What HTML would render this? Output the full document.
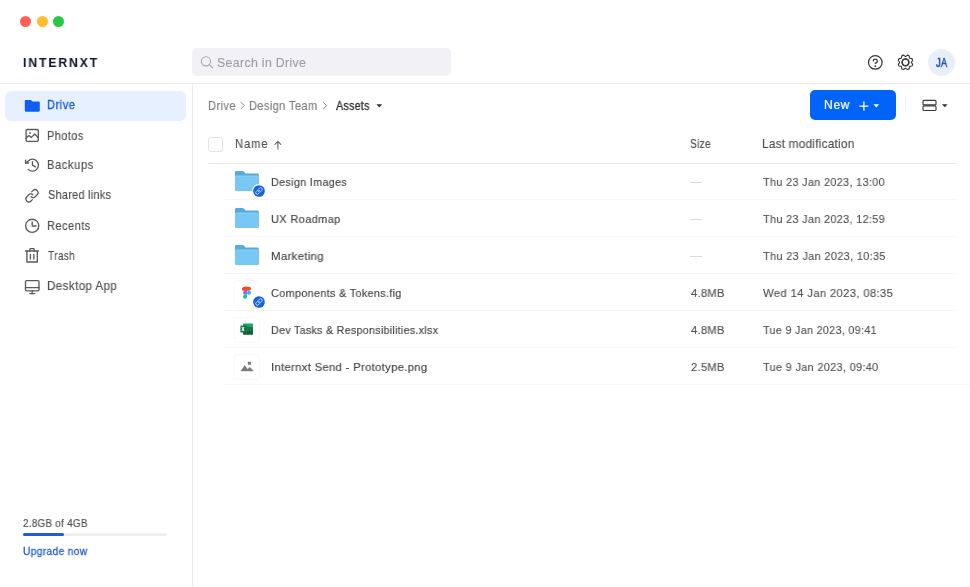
<!DOCTYPE html>
<html><head><meta charset="utf-8"><style>
html,body{margin:0;padding:0;width:970px;height:587px;overflow:hidden;background:#fff;font-family:"Liberation Sans", sans-serif;}
.t{position:absolute;white-space:nowrap;will-change:transform;}
.abs{position:absolute;}
</style></head><body>
<div class="abs" style="left:20.0px;top:16px;width:11px;height:11px;background:#FE5F57;border-radius:50%;"></div>
<div class="abs" style="left:36.5px;top:16px;width:11px;height:11px;background:#FEBC2E;border-radius:50%;"></div>
<div class="abs" style="left:53.0px;top:16px;width:11px;height:11px;background:#28C840;border-radius:50%;"></div>
<div class="abs" style="left:0px;top:83px;width:970px;height:1px;background:#ECECEC;"></div>
<div class="abs" style="left:192px;top:84px;width:1px;height:503px;background:#ECECEC;"></div>
<div class="abs" style="left:192px;top:48px;width:259px;height:28px;background:#F1F1F6;border-radius:5px;"></div>
<div class="abs" style="left:928px;top:49px;width:27px;height:27px;background:#E8EFFB;border-radius:50%;"></div>
<div class="abs" style="left:5px;top:91px;width:181px;height:30px;background:#E6F0FE;border-radius:6px;"></div>
<div class="abs" style="left:23px;top:533px;width:144px;height:3px;background:#EFEFEF;border-radius:2px;"></div>
<div class="abs" style="left:23px;top:533px;width:41px;height:3px;background:#1F5BD8;border-radius:2px;"></div>
<div class="abs" style="left:810px;top:90px;width:86px;height:30px;background:#0064F8;border-radius:5px;"></div>
<div class="abs" style="left:905px;top:96px;width:1px;height:16px;background:#F0F0F0;"></div>
<div class="abs" style="left:208px;top:137px;width:12.6px;height:12.6px;background:transparent;border:1px solid #E2E2E2;border-radius:2.5px;"></div>
<div class="abs" style="left:208px;top:162.6px;width:748px;height:1.2px;background:#E9E9E9;"></div>
<div class="abs" style="left:689.5px;top:182.3px;width:12px;height:1px;background:#DCDCDC;"></div>
<div class="abs" style="left:224px;top:199px;width:731px;height:1px;background:#F5F5F5;"></div>
<div class="abs" style="left:689.5px;top:219.3px;width:12px;height:1px;background:#DCDCDC;"></div>
<div class="abs" style="left:224px;top:236px;width:731px;height:1px;background:#F5F5F5;"></div>
<div class="abs" style="left:689.5px;top:256.3px;width:12px;height:1px;background:#DCDCDC;"></div>
<div class="abs" style="left:224px;top:273px;width:731px;height:1px;background:#F5F5F5;"></div>
<div class="abs" style="left:224px;top:310px;width:731px;height:1px;background:#F5F5F5;"></div>
<div class="abs" style="left:224px;top:347px;width:731px;height:1px;background:#F5F5F5;"></div>
<div class="abs" style="left:224px;top:384px;width:746px;height:1px;background:#F5F5F5;"></div>
<div class="t" id="logo" style="left:22.50px;top:55.93px;font-size:13.08px;line-height:13.08px;letter-spacing:2.061px;color:#111A33;font-weight:700;-webkit-text-stroke:0.1px #111A33;transform:scaleX(0.93);transform-origin:0 0;">INTERNXT</div>
<div class="t" id="search" style="left:217.00px;top:56.66px;font-size:12.21px;line-height:12.21px;letter-spacing:0.325px;color:#9D9DA5;font-weight:400;-webkit-text-stroke:0.12px #9D9DA5;transform:scaleX(1.0112);transform-origin:0 0;">Search in Drive</div>
<div class="t" id="ja" style="left:936.00px;top:56.67px;font-size:12.20px;line-height:12.20px;letter-spacing:0.320px;color:#24509F;font-weight:400;-webkit-text-stroke:0.45px #24509F;transform:scaleX(0.76);transform-origin:0 0;">JA</div>
<div class="t" id="s_drive" style="left:47.00px;top:99.36px;font-size:12.21px;line-height:12.21px;letter-spacing:0.616px;color:#1D5FDB;font-weight:400;-webkit-text-stroke:0.35px #1D5FDB;transform:scaleX(0.9012);transform-origin:0 0;">Drive</div>
<div class="t" id="s_photos" style="left:46.80px;top:129.59px;font-size:12.06px;line-height:12.06px;letter-spacing:0.486px;color:#4E4E4E;font-weight:400;-webkit-text-stroke:0.15px #4E4E4E;transform:scaleX(0.9060);transform-origin:0 0;">Photos</div>
<div class="t" id="s_backups" style="left:47.00px;top:159.39px;font-size:12.06px;line-height:12.06px;letter-spacing:0.687px;color:#4E4E4E;font-weight:400;-webkit-text-stroke:0.15px #4E4E4E;transform:scaleX(0.9191);transform-origin:0 0;">Backups</div>
<div class="t" id="s_shared" style="left:47.80px;top:189.39px;font-size:12.06px;line-height:12.06px;letter-spacing:0.270px;color:#4E4E4E;font-weight:400;-webkit-text-stroke:0.15px #4E4E4E;transform:scaleX(0.9087);transform-origin:0 0;">Shared links</div>
<div class="t" id="s_recents" style="left:46.80px;top:219.69px;font-size:12.06px;line-height:12.06px;letter-spacing:0.515px;color:#4E4E4E;font-weight:400;-webkit-text-stroke:0.15px #4E4E4E;transform:scaleX(0.9125);transform-origin:0 0;">Recents</div>
<div class="t" id="s_trash" style="left:47.60px;top:249.59px;font-size:12.06px;line-height:12.06px;letter-spacing:0.488px;color:#4E4E4E;font-weight:400;-webkit-text-stroke:0.15px #4E4E4E;transform:scaleX(0.8279);transform-origin:0 0;">Trash</div>
<div class="t" id="s_desktop" style="left:46.70px;top:279.89px;font-size:12.06px;line-height:12.06px;letter-spacing:0.424px;color:#4E4E4E;font-weight:400;-webkit-text-stroke:0.15px #4E4E4E;transform:scaleX(0.9621);transform-origin:0 0;">Desktop App</div>
<div class="t" id="storage" style="left:23.20px;top:518.51px;font-size:10.03px;line-height:10.03px;letter-spacing:0.314px;color:#4E4E4E;font-weight:400;-webkit-text-stroke:0.15px #4E4E4E;transform:scaleX(0.9774);transform-origin:0 0;">2.8GB of 4GB</div>
<div class="t" id="upgrade" style="left:23.20px;top:545.52px;font-size:10.61px;line-height:10.61px;letter-spacing:0.332px;color:#2460D0;font-weight:400;-webkit-text-stroke:0.3px #2460D0;transform:scaleX(0.9666);transform-origin:0 0;">Upgrade now</div>
<div class="t" id="bc_drive" style="left:207.60px;top:99.79px;font-size:12.06px;line-height:12.06px;letter-spacing:0.454px;color:#7C7C7C;font-weight:400;-webkit-text-stroke:0.15px #7C7C7C;transform:scaleX(0.9210);transform-origin:0 0;">Drive</div>
<div class="t" id="bc_team" style="left:248.80px;top:99.79px;font-size:12.06px;line-height:12.06px;letter-spacing:0.411px;color:#7C7C7C;font-weight:400;-webkit-text-stroke:0.15px #7C7C7C;transform:scaleX(0.9178);transform-origin:0 0;">Design Team</div>
<div class="t" id="bc_assets" style="left:336.20px;top:99.79px;font-size:12.06px;line-height:12.06px;letter-spacing:0.203px;color:#303030;font-weight:400;-webkit-text-stroke:0.3px #303030;transform:scaleX(0.8990);transform-origin:0 0;">Assets</div>
<div class="t" id="new" style="left:824.20px;top:99.49px;font-size:12.06px;line-height:12.06px;letter-spacing:0.713px;color:#FFFFFF;font-weight:400;-webkit-text-stroke:0.2px #FFFFFF;transform:scaleX(0.9946);transform-origin:0 0;">New</div>
<div class="t" id="h_name" style="left:234.80px;top:138.81px;font-size:11.92px;line-height:11.92px;letter-spacing:1.064px;color:#505050;font-weight:400;-webkit-text-stroke:0.15px #505050;transform:scaleX(0.9336);transform-origin:0 0;">Name</div>
<div class="t" id="h_size" style="left:690.20px;top:138.71px;font-size:11.92px;line-height:11.92px;letter-spacing:0.370px;color:#505050;font-weight:400;-webkit-text-stroke:0.15px #505050;transform:scaleX(0.8500);transform-origin:0 0;">Size</div>
<div class="t" id="h_last" style="left:762.00px;top:138.71px;font-size:11.92px;line-height:11.92px;letter-spacing:0.262px;color:#505050;font-weight:400;-webkit-text-stroke:0.15px #505050;transform:scaleX(0.9864);transform-origin:0 0;">Last modification</div>
<div class="t" id="n0" style="left:271.30px;top:175.96px;font-size:11.63px;line-height:11.63px;letter-spacing:0.344px;color:#444444;font-weight:400;-webkit-text-stroke:0.15px #444444;transform:scaleX(0.9277);transform-origin:0 0;">Design Images</div>
<div class="t" id="d0" style="left:762.80px;top:175.96px;font-size:11.63px;line-height:11.63px;letter-spacing:0.345px;color:#505050;font-weight:400;-webkit-text-stroke:0.12px #505050;transform:scaleX(0.9355);transform-origin:0 0;">Thu 23 Jan 2023, 13:00</div>
<div class="t" id="n1" style="left:271.30px;top:212.96px;font-size:11.63px;line-height:11.63px;letter-spacing:0.385px;color:#444444;font-weight:400;-webkit-text-stroke:0.15px #444444;transform:scaleX(0.9459);transform-origin:0 0;">UX Roadmap</div>
<div class="t" id="d1" style="left:762.80px;top:212.96px;font-size:11.63px;line-height:11.63px;letter-spacing:0.304px;color:#505050;font-weight:400;-webkit-text-stroke:0.12px #505050;transform:scaleX(0.9417);transform-origin:0 0;">Thu 23 Jan 2023, 12:59</div>
<div class="t" id="n2" style="left:271.30px;top:249.96px;font-size:11.63px;line-height:11.63px;letter-spacing:0.272px;color:#444444;font-weight:400;-webkit-text-stroke:0.15px #444444;transform:scaleX(0.9874);transform-origin:0 0;">Marketing</div>
<div class="t" id="d2" style="left:762.80px;top:249.96px;font-size:11.63px;line-height:11.63px;letter-spacing:0.323px;color:#505050;font-weight:400;-webkit-text-stroke:0.12px #505050;transform:scaleX(0.9455);transform-origin:0 0;">Thu 23 Jan 2023, 10:35</div>
<div class="t" id="n3" style="left:271.30px;top:286.96px;font-size:11.63px;line-height:11.63px;letter-spacing:0.297px;color:#444444;font-weight:400;-webkit-text-stroke:0.15px #444444;transform:scaleX(0.9390);transform-origin:0 0;">Components &amp; Tokens.fig</div>
<div class="t" id="d3" style="left:762.80px;top:286.96px;font-size:11.63px;line-height:11.63px;letter-spacing:0.310px;color:#505050;font-weight:400;-webkit-text-stroke:0.12px #505050;transform:scaleX(0.9765);transform-origin:0 0;">Wed 14 Jan 2023, 08:35</div>
<div class="t" id="z3" style="left:690.50px;top:286.96px;font-size:11.63px;line-height:11.63px;letter-spacing:0.233px;color:#505050;font-weight:400;-webkit-text-stroke:0.12px #505050;transform:scaleX(0.9695);transform-origin:0 0;">4.8MB</div>
<div class="t" id="n4" style="left:271.30px;top:323.96px;font-size:11.63px;line-height:11.63px;letter-spacing:0.283px;color:#444444;font-weight:400;-webkit-text-stroke:0.15px #444444;transform:scaleX(0.9240);transform-origin:0 0;">Dev Tasks &amp; Responsibilities.xlsx</div>
<div class="t" id="d4" style="left:762.80px;top:323.96px;font-size:11.63px;line-height:11.63px;letter-spacing:0.327px;color:#505050;font-weight:400;-webkit-text-stroke:0.12px #505050;transform:scaleX(0.9277);transform-origin:0 0;">Tue 9 Jan 2023, 09:41</div>
<div class="t" id="z4" style="left:690.50px;top:323.96px;font-size:11.63px;line-height:11.63px;letter-spacing:0.233px;color:#505050;font-weight:400;-webkit-text-stroke:0.12px #505050;transform:scaleX(0.9695);transform-origin:0 0;">4.8MB</div>
<div class="t" id="n5" style="left:270.50px;top:360.96px;font-size:11.63px;line-height:11.63px;letter-spacing:0.300px;color:#444444;font-weight:400;-webkit-text-stroke:0.15px #444444;transform:scaleX(0.9746);transform-origin:0 0;">Internxt Send - Prototype.png</div>
<div class="t" id="d5" style="left:762.80px;top:360.96px;font-size:11.63px;line-height:11.63px;letter-spacing:0.320px;color:#505050;font-weight:400;-webkit-text-stroke:0.12px #505050;transform:scaleX(0.9423);transform-origin:0 0;">Tue 9 Jan 2023, 09:40</div>
<div class="t" id="z5" style="left:690.50px;top:360.96px;font-size:11.63px;line-height:11.63px;letter-spacing:0.233px;color:#505050;font-weight:400;-webkit-text-stroke:0.12px #505050;transform:scaleX(0.9695);transform-origin:0 0;">2.5MB</div>
<svg class="abs" style="left:0;top:0" width="970" height="587" viewBox="0 0 970 587">
<!-- drive folder -->
<path d="M24.8,101 Q24.8,99.9 25.9,99.9 L30.4,99.9 Q31,99.9 31.5,100.5 L32.6,101.6 L38.7,101.6 Q39.8,101.6 39.8,102.7 L39.8,110.6 Q39.8,111.7 38.7,111.7 L25.9,111.7 Q24.8,111.7 24.8,110.6 Z" fill="#0F5FF5"/>
<!-- photos -->
<g fill="none" stroke="#5B5B5B" stroke-width="1.35" stroke-linejoin="round" stroke-linecap="round">
<rect x="26.1" y="129.5" width="12.2" height="11.8" rx="1"/>
<path d="M26.1,138.2 L28.9,135.6 L31.2,137.6 L34.7,134 L38.3,137.8"/>
</g>
<circle cx="30" cy="132.9" r="0.9" fill="#5B5B5B"/>
<!-- backups -->
<g transform="translate(22.9,155.6) scale(0.0745)" fill="none" stroke="#5B5B5B" stroke-width="18" stroke-linecap="round" stroke-linejoin="round">
<polyline points="128 80 128 128 169.6 152"/>
<polyline points="75.8 99.7 35.8 99.7 35.8 59.7"/>
<path d="M71.4,184.6a80,80,0,1,0,0-113.2L35.8,99.7"/>
</g>
<!-- link -->
<g transform="translate(23.3,187.05) scale(0.068)" fill="none" stroke="#5B5B5B" stroke-width="18" stroke-linecap="round" stroke-linejoin="round">
<path d="M122.3,71.4l19.8-19.8a44.1,44.1,0,0,1,62.4,62.4l-28.3,28.2a43.9,43.9,0,0,1-62.2,0"/>
<path d="M133.7,184.6l-19.8,19.8a44.1,44.1,0,0,1-62.4-62.4l28.3-28.2a43.9,43.9,0,0,1,62.2,0"/>
</g>
<!-- recents -->
<g fill="none" stroke="#5B5B5B" stroke-width="1.35" stroke-linecap="round" stroke-linejoin="round">
<circle cx="32.2" cy="225.8" r="6.6"/>
<path d="M32.2,222 L32.2,226 L36.1,226"/>
</g>
<!-- trash -->
<g fill="none" stroke="#5B5B5B" stroke-width="1.35" stroke-linecap="round" stroke-linejoin="round">
<path d="M25.5,251 L38.4,251"/>
<path d="M29.6,251 L30.2,248.6 L33.9,248.6 L34.5,251"/>
<path d="M26.9,251 L26.9,262 L37.3,262 L37.3,251"/>
<path d="M30.4,254.5 L30.4,259"/>
<path d="M33.8,254.5 L33.8,259"/>
</g>
<!-- desktop -->
<g fill="none" stroke="#5B5B5B" stroke-width="1.35" stroke-linecap="round" stroke-linejoin="round">
<rect x="25.5" y="280.6" width="13.5" height="10.3" rx="1.1"/>
<path d="M25.5,287.6 L39,287.6"/>
<path d="M32.2,290.9 L32.2,293.5 M29.7,293.6 L34.8,293.6"/>
</g>
<!-- search icon -->
<g fill="none" stroke="#A6A6AE" stroke-width="1.1" stroke-linecap="round">
<circle cx="205.9" cy="61.3" r="4.6"/>
<path d="M209.2,64.6 L212.5,67.9"/>
</g>
<!-- help -->
<g transform="translate(875.3,62.45) scale(0.0707) translate(-128,-128)" fill="none" stroke="#3A3A3A" stroke-width="18" stroke-linecap="round" stroke-linejoin="round">
<circle cx="128" cy="128" r="96"/>
<path d="M128,144v-8a28,28,0,1,0-28-28"/>
<circle cx="128" cy="180" r="13" fill="#3A3A3A" stroke="none"/>
</g>
<!-- gear -->
<g transform="translate(905.5,62.35) scale(0.0715) translate(-128,-128)" fill="none" stroke="#3A3A3A" stroke-width="16" stroke-linecap="round" stroke-linejoin="round">
<circle cx="128" cy="128" r="50"/>
<path d="M183.7,65.1q3.8,3.5,7.2,7.2l27.3,3.9a103.2,103.2,0,0,1,10.2,24.6l-16.6,22.1s.3,6.8,0,10.2l16.6,22.1a102.2,102.2,0,0,1-10.2,24.6l-27.3,3.9s-4.7,4.9-7.2,7.2l-3.9,27.3a104,104,0,0,1-24.6,10.2l-22.1-16.6a57.9,57.9,0,0,1-10.2,0l-22.1,16.6a102.2,102.2,0,0,1-24.6-10.2l-3.9-27.3q-3.7-3.5-7.2-7.2l-27.3-3.9a103.2,103.2,0,0,1-10.2-24.6l16.6-22.1s-.3-6.8,0-10.2L27.6,100.8A102.2,102.2,0,0,1,37.8,76.2l27.3-3.9q3.5-3.7,7.2-7.2l3.9-27.3a104,104,0,0,1,24.6-10.2l22.1,16.6a57.9,57.9,0,0,1,10.2,0l22.1-16.6a102.2,102.2,0,0,1,24.6,10.2Z"/>
</g>
<circle cx="905.5" cy="62.35" r="3.2" fill="none" stroke="#3A3A3A" stroke-width="1.3"/>
<!-- breadcrumb chevrons -->
<g fill="none" stroke="#8A8A8A" stroke-width="1" stroke-linecap="round" stroke-linejoin="round">
<path d="M241.2,102.5 L244.2,105.6 L241.2,108.7"/>
<path d="M323.6,102.5 L326.6,105.6 L323.6,108.7"/>
</g>
<path d="M376.4,104.3 L382.2,104.3 L379.3,107.4 Z" fill="#333"/>
<!-- new button plus / caret -->
<g stroke="#fff" stroke-width="1.3" stroke-linecap="round">
<path d="M863.9,102 L863.9,110.2 M859.8,106.1 L868,106.1"/>
</g>
<path d="M873.4,104.3 L879.2,104.3 L876.3,107.5 Z" fill="#fff"/>
<!-- list icon -->
<g fill="none" stroke="#3A3A3A" stroke-width="1.15">
<rect x="923" y="100.3" width="13" height="4.6" rx="1"/>
<rect x="923" y="105.9" width="13" height="4.6" rx="1"/>
</g>
<path d="M941.9,104.3 L947.6,104.3 L944.75,107.2 Z" fill="#333"/>
<!-- name arrow -->
<g fill="none" stroke="#666" stroke-width="1.1" stroke-linecap="round" stroke-linejoin="round">
<path d="M277.9,141.5 L277.9,149 M275,144.3 L277.9,141.4 L280.8,144.3"/>
</g>
</svg>
<svg class="abs" style="left:234.9px;top:171px" width="25" height="21" viewBox="0 0 25 21">
<path d="M0,1.4 Q0,0 1.4,0 L7.6,0 Q8.3,0 8.8,0.5 L10.6,2.4 L22.4,2.4 Q23.8,2.4 23.8,3.8 L23.8,18.4 Q23.8,19.8 22.4,19.8 L1.4,19.8 Q0,19.8 0,18.4 Z" fill="#56AADD"/>
<path d="M0,6.1 Q0,4.7 1.4,4.7 L22.4,4.7 Q23.8,4.7 23.8,6.1 L23.8,18.4 Q23.8,19.8 22.4,19.8 L1.4,19.8 Q0,19.8 0,18.4 Z" fill="#79C7F4"/><rect x="0.6" y="4.7" width="22.6" height="0.7" fill="#94D6FA"/>
</svg>
<svg class="abs" style="left:234.9px;top:208px" width="25" height="21" viewBox="0 0 25 21">
<path d="M0,1.4 Q0,0 1.4,0 L7.6,0 Q8.3,0 8.8,0.5 L10.6,2.4 L22.4,2.4 Q23.8,2.4 23.8,3.8 L23.8,18.4 Q23.8,19.8 22.4,19.8 L1.4,19.8 Q0,19.8 0,18.4 Z" fill="#56AADD"/>
<path d="M0,6.1 Q0,4.7 1.4,4.7 L22.4,4.7 Q23.8,4.7 23.8,6.1 L23.8,18.4 Q23.8,19.8 22.4,19.8 L1.4,19.8 Q0,19.8 0,18.4 Z" fill="#79C7F4"/><rect x="0.6" y="4.7" width="22.6" height="0.7" fill="#94D6FA"/>
</svg>
<svg class="abs" style="left:234.9px;top:245px" width="25" height="21" viewBox="0 0 25 21">
<path d="M0,1.4 Q0,0 1.4,0 L7.6,0 Q8.3,0 8.8,0.5 L10.6,2.4 L22.4,2.4 Q23.8,2.4 23.8,3.8 L23.8,18.4 Q23.8,19.8 22.4,19.8 L1.4,19.8 Q0,19.8 0,18.4 Z" fill="#56AADD"/>
<path d="M0,6.1 Q0,4.7 1.4,4.7 L22.4,4.7 Q23.8,4.7 23.8,6.1 L23.8,18.4 Q23.8,19.8 22.4,19.8 L1.4,19.8 Q0,19.8 0,18.4 Z" fill="#79C7F4"/><rect x="0.6" y="4.7" width="22.6" height="0.7" fill="#94D6FA"/>
</svg>
<div class="abs" style="left:235px;top:280.5px;width:24px;height:24px;border-radius:3px;background:#fff;box-shadow:0 0 0 1px #F9F9F9"></div>
<div class="abs" style="left:235px;top:317.5px;width:24px;height:24px;border-radius:3px;background:#fff;box-shadow:0 0 0 1px #F9F9F9"></div>
<div class="abs" style="left:235px;top:354.5px;width:24px;height:24px;border-radius:3px;background:#fff;box-shadow:0 0 0 1px #F9F9F9"></div>
<svg class="abs" style="left:242px;top:286px" width="10" height="13" viewBox="0 0 10 13">
<path d="M1,1.2 Q1,0.8 3,0.8 L7,0.8 A2,2 0 0 1 7,4.8 L1,4.8 A2,2 0 0 1 1,1.2Z" fill="#F24E1E"/>
<path d="M3,0.8 L5,0.8 L5,4.8 L3,4.8 A2,2 0 0 1 3,0.8Z" fill="#F24E1E"/>
<path d="M5,4.8 L5,8.8 L3,8.8 A2,2 0 0 1 3,4.8Z" fill="#A259FF"/>
<circle cx="7" cy="6.8" r="2" fill="#1ABCFE"/>
<path d="M5,8.8 L5,10.8 A2,2 0 1 1 3,8.8Z" fill="#0ACF83"/>
</svg>
<svg class="abs" style="left:240px;top:323px" width="13" height="12" viewBox="0 0 13 12">
<rect x="3" y="0.4" width="10" height="11.2" rx="0.8" fill="#21A366"/>
<rect x="3" y="4" width="10" height="4" fill="#107C41"/>
<rect x="3" y="8" width="10" height="3.6" fill="#185C37"/>
<rect x="0.4" y="2.5" width="6.6" height="7" rx="0.6" fill="#107C41"/>
<path d="M1.9,4 L4,8 M4,4 L1.9,8" stroke="#fff" stroke-width="1"/>
</svg>
<svg class="abs" style="left:240px;top:361px" width="14" height="11" viewBox="0 0 14 11">
<path d="M0.9,10 L4.6,4.6 L7.6,8.3 L9.9,6.2 L13.4,10 Z" fill="#7A7A7A" stroke="#7A7A7A" stroke-width="0.4" stroke-linejoin="round"/>
<rect x="7.9" y="0.7" width="3.1" height="3.1" rx="0.5" fill="#7A7A7A"/>
</svg>
<svg class="abs" style="left:252.05px;top:183.8px" width="14" height="14" viewBox="0 0 14 14">
<circle cx="7" cy="7" r="6.9" fill="#fff"/>
<circle cx="7" cy="7" r="5.85" fill="#1560E3"/>
<g transform="translate(7,7) scale(0.036) translate(-128,-128)" fill="none" stroke="#DDEBFF" stroke-width="26" stroke-linecap="round" stroke-linejoin="round">
<path d="M122.3,71.4l19.8-19.8a44.1,44.1,0,0,1,62.4,62.4l-28.3,28.2a43.9,43.9,0,0,1-62.2,0"/>
<path d="M133.7,184.6l-19.8,19.8a44.1,44.1,0,0,1-62.4-62.4l28.3-28.2a43.9,43.9,0,0,1,62.2,0"/>
</g>
</svg>
<svg class="abs" style="left:252.3px;top:294.5px" width="14" height="14" viewBox="0 0 14 14">
<circle cx="7" cy="7" r="6.9" fill="#fff"/>
<circle cx="7" cy="7" r="5.85" fill="#1560E3"/>
<g transform="translate(7,7) scale(0.036) translate(-128,-128)" fill="none" stroke="#DDEBFF" stroke-width="26" stroke-linecap="round" stroke-linejoin="round">
<path d="M122.3,71.4l19.8-19.8a44.1,44.1,0,0,1,62.4,62.4l-28.3,28.2a43.9,43.9,0,0,1-62.2,0"/>
<path d="M133.7,184.6l-19.8,19.8a44.1,44.1,0,0,1-62.4-62.4l28.3-28.2a43.9,43.9,0,0,1,62.2,0"/>
</g>
</svg>
</body></html>
